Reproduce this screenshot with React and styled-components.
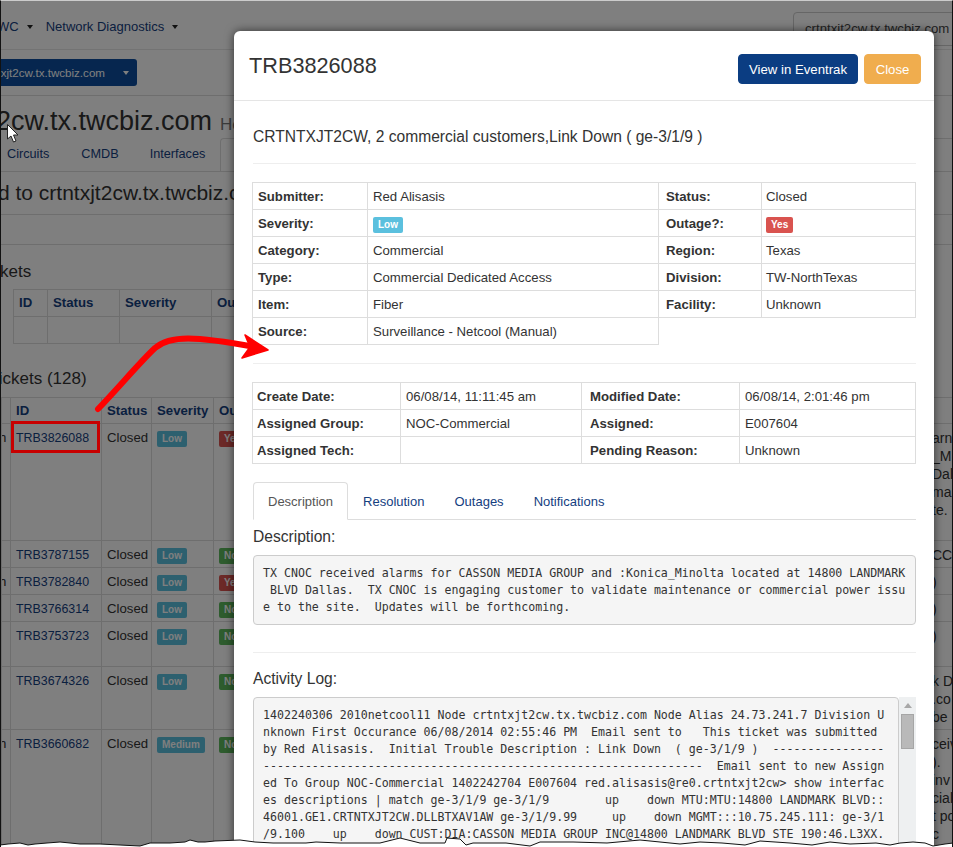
import React from 'react'
import styled, { createGlobalStyle } from 'styled-components'

const GlobalStyle = createGlobalStyle`
    html, body {
        margin: 0;
        padding: 0;
        background: #fff;
    }
    body {
        font-family: "Liberation Sans", Arial, sans-serif;
        font-size: 13.2px;
        line-height: 20px;
        color: #333;
    }
`

const LINK = '#15407f'

const Page = styled.div`
    position: relative;
    width: 953px;
    height: 847px;
    box-sizing: border-box;
    border-left: 1px solid #111;
    border-right: 1px solid #111;
    border-top: 1px solid #ccc;
    overflow: hidden;
    background: #fff;
`

const Navbar = styled.div`
    display: flex;
    align-items: center;
    height: 49px;
    padding-top: 4px;
    box-sizing: border-box;
    border-bottom: 1px solid #e7e7e7;
`

const NavItem = styled.span`
    display: flex;
    align-items: center;
    flex-shrink: 0;
    gap: 8px;
    font-size: 13px;
    color: ${LINK};
    margin-left: ${p => p.$left}px;
`

const Caret = styled.i`
    width: 0;
    height: 0;
    border-top: 4px solid ${p => p.$color || '#222'};
    border-left: 3px solid transparent;
    border-right: 3px solid transparent;
`

const SearchBox = styled.div`
    flex-shrink: 0;
    align-self: flex-start;
    width: 190px;
    height: 34px;
    margin: 7px -31px 0 auto;
    padding: 6px 11px;
    box-sizing: border-box;
    border: 1px solid #ccc;
    border-radius: 4px;
    color: #444;
    white-space: nowrap;
`

const Toolbar = styled.div`
    height: 36px;
    padding-top: 9px;
    border-bottom: 1px solid #ddd;
`

const HostButton = styled.div`
    display: flex;
    align-items: center;
    justify-content: flex-end;
    gap: 18px;
    width: 136px;
    height: 27px;
    padding-right: 8px;
    box-sizing: border-box;
    border-radius: 0 3px 3px 0;
    background: #0c4d9e;
    color: #fff;
    font-size: 11.6px;
    white-space: nowrap;
`

const HostHeading = styled.div`
    height: 42px;
    line-height: 50px;
    font-size: 27px;
    margin-left: -5px;
    white-space: nowrap;

    small {
        margin-left: 8px;
        font-size: 17px;
        color: #777;
    }
`

const HostTabs = styled.div`
    display: flex;
    height: 33px;
    line-height: 32px;
    border-bottom: 1px solid #ddd;
    position: relative;
`

const HostTab = styled.span`
    color: ${LINK};
    font-size: 12.7px;
    margin-left: ${p => p.$left}px;
`

const ActiveTabEdge = styled.span`
    margin-left: 15px;
    width: 8px;
    border: 1px solid #ddd;
    border-bottom: 0;
    border-right: 0;
    border-radius: 4px 0 0 0;
    flex-grow: 1;
`

const Notice = styled.div`
    height: 42px;
    line-height: 41px;
    font-size: 21px;
    margin-left: -3px;
    white-space: nowrap;
    border-bottom: 1px solid #ddd;
`

const SectionEnd = styled.div`
    height: 29px;
    border-bottom: 1px solid #ddd;
`

const SectionTitle = styled.div`
    font-size: 17px;
    height: ${p => p.$h}px;
    line-height: ${p => p.$line}px;
    margin-left: ${p => p.$left}px;
    white-space: nowrap;
`

const DataTable = styled.table`
    table-layout: fixed;
    border-collapse: collapse;
    margin-left: ${p => p.$left}px;
    width: ${p => p.$width}px;
`

const Col = styled.col`
    width: ${p => p.$w}px;
`

const HeadCell = styled.th`
    height: ${p => p.$h}px;
    padding: 0 5px;
    border: 1px solid #ddd;
    color: ${LINK};
    font-weight: bold;
    text-align: left;
    white-space: nowrap;
    overflow: hidden;
`

const BodyRow = styled.tr`
    height: ${p => p.$h}px;
`

const BodyCell = styled.td`
    padding: 4px 5px 0;
    border: 1px solid #ddd;
    vertical-align: top;
    white-space: nowrap;
    overflow: hidden;
    color: ${p => (p.$link ? LINK : '#333')};
`

const TicketId = styled.span`
    font-size: 12.4px;
`

const TailCell = styled(BodyCell)`
    padding-left: 0;
    text-indent: -3px;
`

const NoteCell = styled(BodyCell)`
    padding: 5px 0 0 1px;
    line-height: 18px;
    font-size: 14px;
    overflow: visible;
`

const Label = styled.span`
    display: inline-block;
    padding: 0 5px;
    height: 16px;
    line-height: 16px;
    margin-top: 3px;
    border-radius: 2px;
    font-size: 10px;
    font-weight: bold;
    color: #fff;
    vertical-align: top;
    background: ${p => ({ info: '#5bc0de', danger: '#d9534f', success: '#5cb85c' })[p.$kind]};
`

const Backdrop = styled.div`
    position: absolute;
    inset: 0;
    background: rgba(0, 0, 0, .5);
`

const Modal = styled.div`
    position: absolute;
    left: 233px;
    top: 30px;
    width: 700px;
    height: 900px;
    border-radius: 6px;
    background: #fff;
    box-shadow: 0 0 10px rgba(0, 0, 0, .6);
`

const ModalHeader = styled.div`
    display: flex;
    align-items: flex-start;
    gap: 6px;
    height: 69px;
    padding: 0 13px 0 15px;
    border-bottom: 1px solid #e5e5e5;
`

const ModalTitle = styled.h4`
    margin: 19px auto 0 0;
    font-size: 21.7px;
    line-height: 32px;
    font-weight: normal;
`

const HeaderButton = styled.button`
    width: ${p => p.$w}px;
    height: 30px;
    margin-top: 23px;
    padding: 0;
    border: 1px solid ${p => p.$bg};
    border-radius: 4px;
    background: ${p => p.$bg};
    color: #fff;
    font: 13.2px "Liberation Sans", Arial, sans-serif;
`

const ModalBody = styled.div`
    padding: 0 18px 0 19px;
`

const Subject = styled.div`
    height: 62px;
    line-height: 72px;
    font-size: 15.6px;
    white-space: nowrap;
`

const Rule = styled.hr`
    margin: ${p => p.$top}px 0 ${p => p.$bottom}px;
    border: 0;
    border-top: 1px solid #eee;
`

const InfoTable = styled.table`
    table-layout: fixed;
    border-collapse: collapse;
    width: 663px;
    margin-left: -1px;
`

const InfoRow = styled.tr`
    height: 27px;
`

const InfoHead = styled.th`
    padding: 1px 4px 0 ${p => p.$pad || 5}px;
    border: 1px solid #ddd;
    text-align: left;
    font-weight: bold;
`

const InfoValue = styled.td`
    padding: 1px 4px 0 ${p => p.$pad || 5}px;
    border: 1px solid #ddd;
    white-space: nowrap;
`

const Tabs = styled.div`
    display: flex;
    align-items: flex-end;
    height: 38px;
    margin-top: 18px;
    border-bottom: 1px solid #ddd;
    box-sizing: border-box;
`

const Tab = styled.span`
    height: 38px;
    line-height: 38px;
    padding: 0 14px;
    box-sizing: border-box;
    font-size: 13px;
    color: ${p => (p.$active ? '#555' : LINK)};
    border: 1px solid ${p => (p.$active ? '#ddd' : 'transparent')};
    border-bottom-color: ${p => (p.$active ? '#fff' : 'transparent')};
    border-radius: 4px 4px 0 0;
    margin-bottom: -1px;
    background: ${p => (p.$active ? '#fff' : 'transparent')};
`

const BlockTitle = styled.div`
    font-size: 15.6px;
    height: ${p => p.$h}px;
    line-height: 26px;
    padding-top: ${p => p.$top}px;
    box-sizing: border-box;
`

const Pre = styled.pre`
    margin: 0;
    padding: 8.5px 9px;
    border: 1px solid #ccc;
    border-radius: 4px;
    background: #f5f5f5;
    color: #333;
    font-family: "DejaVu Sans Mono", monospace;
    font-size: 11.6px;
    line-height: 17px;
    white-space: pre;
    overflow: hidden;
`

const LogBox = styled.div`
    display: flex;
    height: 200px;
`

const LogPre = styled(Pre)`
    flex: 1;
`

const Scrollbar = styled.div`
    flex-shrink: 0;
    width: 17px;
    background: #eef0f1;
    padding: 6px 2px 0;
    box-sizing: border-box;
`

const ScrollUp = styled.div`
    width: 0;
    height: 0;
    margin: 0 auto 6px;
    border-bottom: 5px solid #a8a8a8;
    border-left: 4px solid transparent;
    border-right: 4px solid transparent;
`

const ScrollThumb = styled.div`
    height: 35px;
    box-sizing: border-box;
    border: 1px solid #a6a6a6;
    background: #b9b9b9;
`

const TicketBox = styled.div`
    position: absolute;
    left: 10px;
    top: 420px;
    width: 89px;
    height: 32px;
    box-sizing: border-box;
    border: 3px solid #c80000;
`

const Overlay = styled.svg`
    position: absolute;
    left: -1px;
    top: -1px;
    pointer-events: none;
`

const firstCols = [34, 72, 92, 200]
const mainCols = [9, 91, 50, 62, 717, 30]

const notes = [
    ['arn', '_M', 'Dall', 'ma', 'te.'],
    ['CC'],
    [')'],
    [')'],
    [')'],
    ['k D', '.co', ' be'],
    ['ceiv', ').', 'inv', 'cial', 't po', 'c'],
]

const tickets = [
    { tail: 'h', id: 'TRB3826088', sev: 'Low', out: 'Yes', h: 117 },
    { tail: '', id: 'TRB3787155', sev: 'Low', out: 'No', h: 27 },
    { tail: 'h', id: 'TRB3782840', sev: 'Low', out: 'Yes', h: 27 },
    { tail: '', id: 'TRB3766314', sev: 'Low', out: 'No', h: 27 },
    { tail: '', id: 'TRB3753723', sev: 'Low', out: 'No', h: 45 },
    { tail: '', id: 'TRB3674326', sev: 'Low', out: 'No', h: 63 },
    { tail: 'h', id: 'TRB3660682', sev: 'Medium', out: 'No', h: 120 },
]

const infoRows = [
    ['Submitter:', 'Red Alisasis', 'Status:', 'Closed'],
    ['Severity:', <Label $kind="info">Low</Label>, 'Outage?:', <Label $kind="danger">Yes</Label>],
    ['Category:', 'Commercial', 'Region:', 'Texas'],
    ['Type:', 'Commercial Dedicated Access', 'Division:', 'TW-NorthTexas'],
    ['Item:', 'Fiber', 'Facility:', 'Unknown'],
    ['Source:', 'Surveillance - Netcool (Manual)'],
]

const dateRows = [
    ['Create Date:', '06/08/14, 11:11:45 am', 'Modified Date:', '06/08/14, 2:01:46 pm'],
    ['Assigned Group:', 'NOC-Commercial', 'Assigned:', 'E007604'],
    ['Assigned Tech:', '', 'Pending Reason:', 'Unknown'],
]

const descText = [
    'TX CNOC received alarms for CASSON MEDIA GROUP and :Konica_Minolta located at 14800 LANDMARK',
    ' BLVD Dallas.  TX CNOC is engaging customer to validate maintenance or commercial power issu',
    'e to the site.  Updates will be forthcoming.',
].join('\n')

const logText = [
    '1402240306 2010netcool11 Node crtntxjt2cw.tx.twcbiz.com Node Alias 24.73.241.7 Division U',
    'nknown First Occurance 06/08/2014 02:55:46 PM  Email sent to   This ticket was submitted',
    'by Red Alisasis.  Initial Trouble Description : Link Down  ( ge-3/1/9 )  ----------------',
    '---------------------------------------------------------------  Email sent to new Assign',
    'ed To Group NOC-Commercial 1402242704 E007604 red.alisasis@re0.crtntxjt2cw> show interfac',
    'es descriptions | match ge-3/1/9 ge-3/1/9        up    down MTU:MTU:14800 LANDMARK BLVD::',
    '46001.GE1.CRTNTXJT2CW.DLLBTXAV1AW ge-3/1/9.99     up    down MGMT:::10.75.245.111: ge-3/1',
    '/9.100    up    down CUST:DIA:CASSON MEDIA GROUP INC@14800 LANDMARK BLVD STE 190:46.L3XX.',
].join('\n')

// torn paper edge along the bottom of the capture
const tornEdge = '0,845 8,844 20,843 28,845 35,844 47,843 60,842 80,844 100,844 120,845 140,846 150,843 170,843 185,842 190,840 198,842 205,842 215,841 240,840 255,842 273,843 290,843 306,843 316,842 340,843 380,843 400,838 420,843 445,843 447,838 460,839 466,845 473,843 506,843 530,846 540,842 573,842 607,843 640,840 660,842 680,844 700,842 722,843 745,845 760,841 790,843 812,845 830,842 850,844 876,843 890,845 900,843 913,842 925,843 933,846 945,844 953,843'

function Tickets() {
    return (
        <DataTable $left={0} $width={951}>
            <colgroup>
                {mainCols.map((w, i) => <Col key={i} $w={w} />)}
            </colgroup>
            <thead>
                <tr>
                    <HeadCell $h={25} />
                    <HeadCell $h={25}>ID</HeadCell>
                    <HeadCell $h={25}>Status</HeadCell>
                    <HeadCell $h={25}>Severity</HeadCell>
                    <HeadCell $h={25}>Outage?</HeadCell>
                    <HeadCell $h={25} />
                </tr>
            </thead>
            <tbody>
                {tickets.map((t, i) => (
                    <BodyRow key={t.id} $h={t.h}>
                        <TailCell>{t.tail}</TailCell>
                        <BodyCell $link><TicketId>{t.id}</TicketId></BodyCell>
                        <BodyCell>Closed</BodyCell>
                        <BodyCell><Label $kind="info">{t.sev}</Label></BodyCell>
                        <BodyCell><Label $kind={t.out === 'Yes' ? 'danger' : 'success'}>{t.out}</Label></BodyCell>
                        <NoteCell>{notes[i].map(n => <div key={n}>{n}</div>)}</NoteCell>
                    </BodyRow>
                ))}
            </tbody>
        </DataTable>
    )
}

export default function App() {
    return (
        <Page>
            <GlobalStyle />
            <Navbar>
                <NavItem $left={-4}>WC <Caret /></NavItem>
                <NavItem $left={13}>Network Diagnostics <Caret /></NavItem>
                <SearchBox>crtntxjt2cw.tx.twcbiz.com</SearchBox>
            </Navbar>
            <Toolbar>
                <HostButton>xjt2cw.tx.twcbiz.com <Caret $color="#fff" /></HostButton>
            </Toolbar>
            <HostHeading>2cw.tx.twcbiz.com<small>Health</small></HostHeading>
            <HostTabs>
                <HostTab $left={6}>Circuits</HostTab>
                <HostTab $left={32}>CMDB</HostTab>
                <HostTab $left={31}>Interfaces</HostTab>
                <ActiveTabEdge />
            </HostTabs>
            <Notice>d to crtntxjt2cw.tx.twcbiz.com</Notice>
            <SectionEnd />
            <SectionTitle $h={44} $line={54} $left={-23}>Tickets</SectionTitle>
            <DataTable $left={12} $width={398}>
                <colgroup>
                    {firstCols.map((w, i) => <Col key={i} $w={w} />)}
                </colgroup>
                <thead>
                    <tr>
                        <HeadCell $h={26}>ID</HeadCell>
                        <HeadCell $h={26}>Status</HeadCell>
                        <HeadCell $h={26}>Severity</HeadCell>
                        <HeadCell $h={26}>Outage</HeadCell>
                    </tr>
                </thead>
                <tbody>
                    <BodyRow $h={27}>
                        <BodyCell />
                        <BodyCell />
                        <BodyCell />
                        <BodyCell />
                    </BodyRow>
                </tbody>
            </DataTable>
            <SectionTitle $h={53} $line={69} $left={-12}>Tickets (128)</SectionTitle>
            <Tickets />

            <Backdrop />

            <TicketBox />

            <Modal>
                <ModalHeader>
                    <ModalTitle>TRB3826088</ModalTitle>
                    <HeaderButton $bg="#0b3d82" $w={120}>View in Eventrak</HeaderButton>
                    <HeaderButton $bg="#f0ad4e" $w={57}>Close</HeaderButton>
                </ModalHeader>
                <ModalBody>
                    <Subject>CRTNTXJT2CW, 2 commercial customers,Link Down ( ge-3/1/9 )</Subject>
                    <Rule $top={0} $bottom={18} />
                    <InfoTable>
                        <colgroup>
                            <Col $w={115} />
                            <Col $w={291} />
                            <Col $w={103} />
                            <Col $w={154} />
                        </colgroup>
                        <tbody>
                            {infoRows.map(r => (
                                <InfoRow key={r[0]}>
                                    <InfoHead>{r[0]}</InfoHead>
                                    <InfoValue>{r[1]}</InfoValue>
                                    {r[2] && <InfoHead $pad={7}>{r[2]}</InfoHead>}
                                    {r[2] && <InfoValue $pad={4}>{r[3]}</InfoValue>}
                                </InfoRow>
                            ))}
                        </tbody>
                    </InfoTable>
                    <Rule $top={18} $bottom={18} />
                    <InfoTable>
                        <colgroup>
                            <Col $w={148} />
                            <Col $w={181} />
                            <Col $w={158} />
                            <Col $w={176} />
                        </colgroup>
                        <tbody>
                            {dateRows.map(r => (
                                <InfoRow key={r[0]}>
                                    <InfoHead $pad={4}>{r[0]}</InfoHead>
                                    <InfoValue>{r[1]}</InfoValue>
                                    <InfoHead $pad={8}>{r[2]}</InfoHead>
                                    <InfoValue>{r[3]}</InfoValue>
                                </InfoRow>
                            ))}
                        </tbody>
                    </InfoTable>
                    <Tabs>
                        <Tab $active>Description</Tab>
                        <Tab>Resolution</Tab>
                        <Tab>Outages</Tab>
                        <Tab>Notifications</Tab>
                    </Tabs>
                    <BlockTitle $h={35} $top={4}>Description:</BlockTitle>
                    <Pre>{descText}</Pre>
                    <Rule $top={27} $bottom={13} />
                    <BlockTitle $h={31} $top={0}>Activity Log:</BlockTitle>
                    <LogBox>
                        <LogPre>{logText}</LogPre>
                        <Scrollbar>
                            <ScrollUp />
                            <ScrollThumb />
                        </Scrollbar>
                    </LogBox>
                </ModalBody>
            </Modal>

            {/* the arrow and cursor were drawn on top of the capture */}
            <Overlay width="953" height="847" viewBox="0 0 953 847">
                <path d="M98 409 C120 386 140 362 155 348 C170 335 195 336 255 347" fill="none" stroke="#f00" strokeWidth="6" strokeLinecap="round" />
                <path d="M245 335 L268 350 L242 358 L250 347 Z" fill="#f00" stroke="#f00" strokeWidth="1.5" strokeLinejoin="round" />
                <path d="M7.5 124.5 V139 L11 136 L13.5 142 L16 141 L13.5 135 H18 Z" fill="#fff" stroke="#222" strokeWidth="1" />
                <polygon points={`${tornEdge} 953,847 0,847`} fill="#fff" />
                <polyline points={tornEdge} fill="none" stroke="#111" strokeWidth="1" />
            </Overlay>
        </Page>
    )
}
